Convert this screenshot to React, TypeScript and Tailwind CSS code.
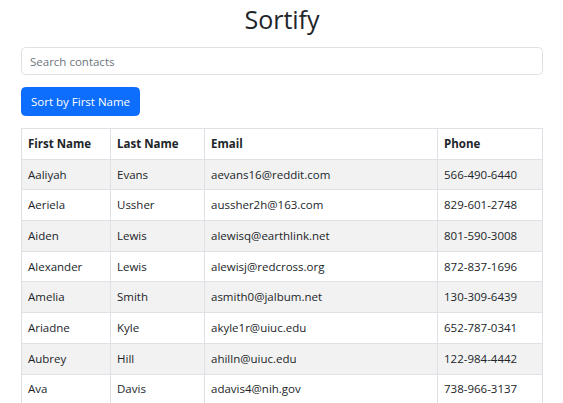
import React from "react";

const rows = [
  ["Aaliyah", "Evans", "aevans16@reddit.com", "566-490-6440"],
  ["Aeriela", "Ussher", "aussher2h@163.com", "829-601-2748"],
  ["Aiden", "Lewis", "alewisq@earthlink.net", "801-590-3008"],
  ["Alexander", "Lewis", "alewisj@redcross.org", "872-837-1696"],
  ["Amelia", "Smith", "asmith0@jalbum.net", "130-309-6439"],
  ["Ariadne", "Kyle", "akyle1r@uiuc.edu", "652-787-0341"],
  ["Aubrey", "Hill", "ahilln@uiuc.edu", "122-984-4442"],
  ["Ava", "Davis", "adavis4@nih.gov", "738-966-3137"],
];

export default function App() {
  return (
    <div
      className="h-[403px] overflow-hidden bg-white text-[#212529] text-[11.5px] leading-[18px]"
      style={{ fontFamily: '"Open Sans", "Noto Sans", sans-serif' }}
    >
      <div className="pl-[21px] pr-[20px] pt-[4px]">
        <h1 className="text-center text-[25px] leading-[30px] font-medium mb-[13px]">Sortify</h1>
        <input
          className="block w-full h-[28px] border border-[#dee2e6] rounded-[4.5px] px-[8px] text-[11.5px] placeholder:text-[#6c757d] outline-none"
          placeholder="Search contacts"
        />
        <button className="mt-[12px] h-[29px] bg-[#0d6efd] text-white rounded-[4.5px] px-[9px] border border-[#0d6efd] text-[11.5px]">
          Sort by First Name
        </button>
        <table className="mt-[12px] w-full border-collapse border border-[#dee2e6]">
          <thead>
            <tr className="h-[30.7px]">
              <th className="text-left font-bold px-[6px] border border-[#dee2e6] w-[89px]">First Name</th>
              <th className="text-left font-bold px-[6px] border border-[#dee2e6] w-[94px]">Last Name</th>
              <th className="text-left font-bold px-[6px] border border-[#dee2e6] w-[233px]">Email</th>
              <th className="text-left font-bold px-[6px] border border-[#dee2e6]">Phone</th>
            </tr>
          </thead>
          <tbody>
            {rows.map((r, i) => (
              <tr key={i} className={"h-[30.7px] " + (i % 2 === 0 ? "bg-[#f2f2f2]" : "bg-white")}>
                {r.map((c, j) => (
                  <td key={j} className="px-[6px] border border-[#dee2e6]">{c}</td>
                ))}
              </tr>
            ))}
          </tbody>
        </table>
      </div>
    </div>
  );
}
